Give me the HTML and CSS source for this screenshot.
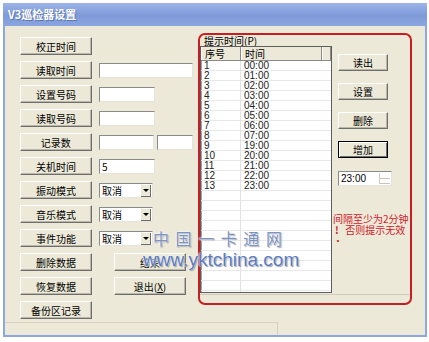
FILE: index.html
```html
<!DOCTYPE html>
<html lang="zh-CN">
<head>
  <meta charset="UTF-8">
  <title>V3巡检器设置</title>
  <link rel="stylesheet" href="styles.css">
</head>
<body>
  <div class="window">
    <div class="titlebar">V3巡检器设置</div>
    <div class="frame">
      <div class="content">
        <div class="left-panel">
          <div class="row"><div class="btn">校正时间</div></div>
          <div class="row"><div class="btn">读取时间</div><div class="field wide"></div></div>
          <div class="row"><div class="btn">设置号码</div><div class="field"></div></div>
          <div class="row"><div class="btn">读取号码</div><div class="field"></div></div>
          <div class="row"><div class="btn">记录数</div><div class="field"></div><div class="field short"></div></div>
          <div class="row"><div class="btn">关机时间</div><div class="field">5</div></div>
          <div class="row"><div class="btn">振动模式</div><div class="combo">取消<span class="arrow"></span></div></div>
          <div class="row"><div class="btn">音乐模式</div><div class="combo">取消<span class="arrow"></span></div></div>
          <div class="row"><div class="btn">事件功能</div><div class="combo">取消<span class="arrow"></span></div></div>
          <div class="row"><div class="btn">删除数据</div><div class="btn mid">结束</div></div>
          <div class="row"><div class="btn">恢复数据</div><div class="btn mid">退出(<u>X</u>)</div></div>
          <div class="row"><div class="btn">备份区记录</div></div>
        </div>

        <!-- red annotation round the group box -->
        <div class="mark">
          <div class="legend">提示时间(<u>P</u>)</div>
          <div class="group">
            <div class="list">
              <div class="list-head">
                <div class="col-no">序号</div>
                <div class="col-time">时间</div>
                <div class="col-rest"></div>
              </div>
              <div class="list-body" id="list-body"></div>
            </div>
            <div class="side">
              <div class="btn small">读出</div>
              <div class="btn small">设置</div>
              <div class="btn small">删除</div>
              <div class="btn small default">增加</div>
              <div class="spin">23:00<span class="spin-buttons"><span class="up"></span><span class="down"></span></span></div>
              <div class="note">间隔至少为2分钟<br><b>!</b> 否则提示无效<br>·</div>
            </div>
          </div>
        </div>
      </div>
      <div class="statusbar"><div class="status-cell"></div></div>
    </div>

    <div class="watermark">
      <div class="wm-name">中 国 一 卡 通 网</div>
      <div class="wm-url">www.yktchina.com</div>
    </div>
  </div>

  <script>
    const times = ['00:00', '01:00', '02:00', '03:00', '04:00', '05:00', '06:00',
                   '07:00', '19:00', '20:00', '21:00', '22:00', '23:00'];
    const listBody = document.getElementById('list-body');
    times.forEach((t, i) => {
      const row = document.createElement('div');
      row.className = 'list-row';
      row.innerHTML = '<span class="col-no">' + (i + 1) + '</span><span class="col-time">' + t + '</span>';
      listBody.appendChild(row);
    });
  </script>
</body>
</html>
```

FILE: styles.css
```css
body {
  margin: 0;
  background-color: #fff;
  font-family: "Noto Sans CJK SC", "Liberation Sans", sans-serif;
  font-size: 10px;
  color: #000;
}
.window {
  position: relative;
  margin: 3px 0 0 3px;
  width: 424px;
}
.titlebar {
  height: 23px;
  line-height: 22px;
  padding-left: 5px;
  background: linear-gradient(#9cb4e8, #7e9ad8 55%, #8aa5df);
  color: #fff;
  font-weight: bold;
  font-size: 11px;
  text-shadow: 1px 1px 0 #5a74b4;
}
.frame {
  border: 2px solid #8ea7dc;
  border-top: 0;
  background-color: #ece9d8;
  height: 309px;
}
.content {
  display: flex;
  align-items: flex-start;
  gap: 5px;
  height: 296px;
  padding: 7px 0 0 15px;
  box-sizing: border-box;
}
.left-panel {
  width: 173px;
  margin-top: 4px;
  display: flex;
  flex-direction: column;
  gap: 6px;
}
.row {
  display: flex;
  align-items: center;
  height: 18px;
}
.btn {
  width: 72px;
  height: 18px;
  line-height: 17px;
  text-align: center;
  background-color: #ece9d8;
  box-sizing: border-box;
  border-top: 1px solid #fff;
  border-left: 1px solid #fff;
  border-right: 1px solid #6e6e6e;
  border-bottom: 1px solid #6e6e6e;
  box-shadow: inset -1px -1px 0 #b9b6aa;
}
.btn.mid {
  margin-left: 22px;
}
.field {
  width: 56px;
  height: 15px;
  margin-left: 7px;
  padding-left: 2px;
  line-height: 14px;
  box-sizing: border-box;
  background-color: #fff;
  border-top: 1px solid #8a8a8a;
  border-left: 1px solid #8a8a8a;
  border-right: 1px solid #e6e4da;
  border-bottom: 1px solid #e6e4da;
}
.field.wide {
  width: 95px;
}
.field.short {
  width: 36px;
  margin-left: 3px;
}
.combo {
  position: relative;
  width: 54px;
  height: 15px;
  margin-left: 7px;
  padding-left: 2px;
  line-height: 14px;
  box-sizing: border-box;
  background-color: #fff;
  border-top: 1px solid #8a8a8a;
  border-left: 1px solid #8a8a8a;
  border-right: 1px solid #e6e4da;
  border-bottom: 1px solid #e6e4da;
}
.arrow {
  position: absolute;
  right: 1px;
  top: 1px;
  width: 9px;
  height: 11px;
  background-color: #ece9d8;
  border-right: 1px solid #6e6e6e;
  border-bottom: 1px solid #6e6e6e;
}
.arrow::after {
  content: "";
  position: absolute;
  left: 2px;
  top: 4px;
  border-left: 3px solid transparent;
  border-right: 3px solid transparent;
  border-top: 3px solid #000;
}
.mark {
  width: 214px;
  height: 272px;
  box-sizing: border-box;
  border: 2px solid #c81d22;
  border-radius: 7px;
}
.legend {
  height: 11px;
  line-height: 11px;
  padding-left: 4px;
  font-size: 10px;
}
.group {
  display: flex;
  height: 248px;
  margin-right: 1px;
  border-bottom: 1px solid #cdcabd;
}
.list {
  width: 132px;
  height: 247px;
  box-sizing: border-box;
  border: 1px solid #5e5e5e;
  box-shadow: inset 1px 1px 0 #a0a0a0;
  background-color: #fff;
  overflow: hidden;
}
.list-head {
  display: flex;
  height: 14px;
  line-height: 13px;
  background-color: #ece9d8;
  border-bottom: 1px solid #8a8a8a;
  box-sizing: border-box;
}
.list-head div {
  height: 13px;
  box-sizing: border-box;
  border-right: 1px solid #8a8a8a;
  border-left: 1px solid #fff;
}
.col-no {
  width: 40px;
  padding-left: 3px;
  box-sizing: border-box;
  display: inline-block;
}
.col-time {
  width: 81px;
  padding-left: 3px;
  box-sizing: border-box;
  display: inline-block;
}
.col-rest {
  flex: 1;
}
.list-body {
  height: 231px;
  font-family: "Liberation Sans", sans-serif;
  font-size: 10px;
  color: #222;
  background:
    linear-gradient(90deg, transparent 39px, #e2e2e2 39px, #e2e2e2 40px, transparent 40px),
    repeating-linear-gradient(transparent 0, transparent 9px, #e8e8e8 9px, #e8e8e8 10px);
}
.list-row {
  display: flex;
  height: 10px;
  line-height: 10px;
}
.side {
  display: flex;
  flex-direction: column;
  margin-left: 6px;
  padding-top: 8px;
}
.btn.small {
  width: 50px;
  height: 17px;
  line-height: 16px;
  margin-bottom: 12px;
}
.btn.default {
  border: 1px solid #000;
  box-shadow: inset 1px 1px 0 #fff, inset -1px -1px 0 #6e6e6e;
  margin-bottom: 13px;
}
.spin {
  position: relative;
  width: 54px;
  height: 15px;
  padding-left: 2px;
  line-height: 14px;
  box-sizing: border-box;
  font-family: "Liberation Sans", sans-serif;
  background-color: #fff;
  border-top: 1px solid #8a8a8a;
  border-left: 1px solid #8a8a8a;
  border-right: 1px solid #e6e4da;
  border-bottom: 1px solid #e6e4da;
}
.spin-buttons {
  position: absolute;
  right: 1px;
  top: 1px;
  width: 10px;
  height: 11px;
  display: flex;
  flex-direction: column;
  border-left: 1px solid #d0cdc0;
}
.spin-buttons span {
  flex: 1;
  border-bottom: 1px solid #c8c5b8;
}
.note {
  margin: 27px 0 0 -5px;
  color: #d0202c;
  font-size: 10px;
  line-height: 11px;
  white-space: nowrap;
}
.note b {
  display: inline-block;
  width: 8px;
  padding-left: 2px;
}
.statusbar {
  height: 13px;
}
.status-cell {
  width: 272px;
  height: 12px;
  border-top: 1px solid #d5d2c5;
  border-right: 1px solid #d5d2c5;
}
.watermark {
  position: absolute;
  left: 140px;
  top: 224px;
  font-family: "Liberation Sans", sans-serif;
  pointer-events: none;
}
.wm-name {
  margin-left: 10px;
  font-family: "Noto Sans CJK SC", sans-serif;
  font-size: 16px;
  line-height: 22px;
  letter-spacing: 1.5px;
  color: #7d93c4;
  text-shadow: 0 0 2px #fff, 0 0 2px #fff, 1px 1px 1px #8a8a8a;
}
.wm-url {
  font-size: 19px;
  line-height: 22px;
  color: #5a7cc0;
  text-shadow: 0 0 2px #fff, 0 0 2px #fff, 1px 1px 1px #7a7a7a;
}
```
